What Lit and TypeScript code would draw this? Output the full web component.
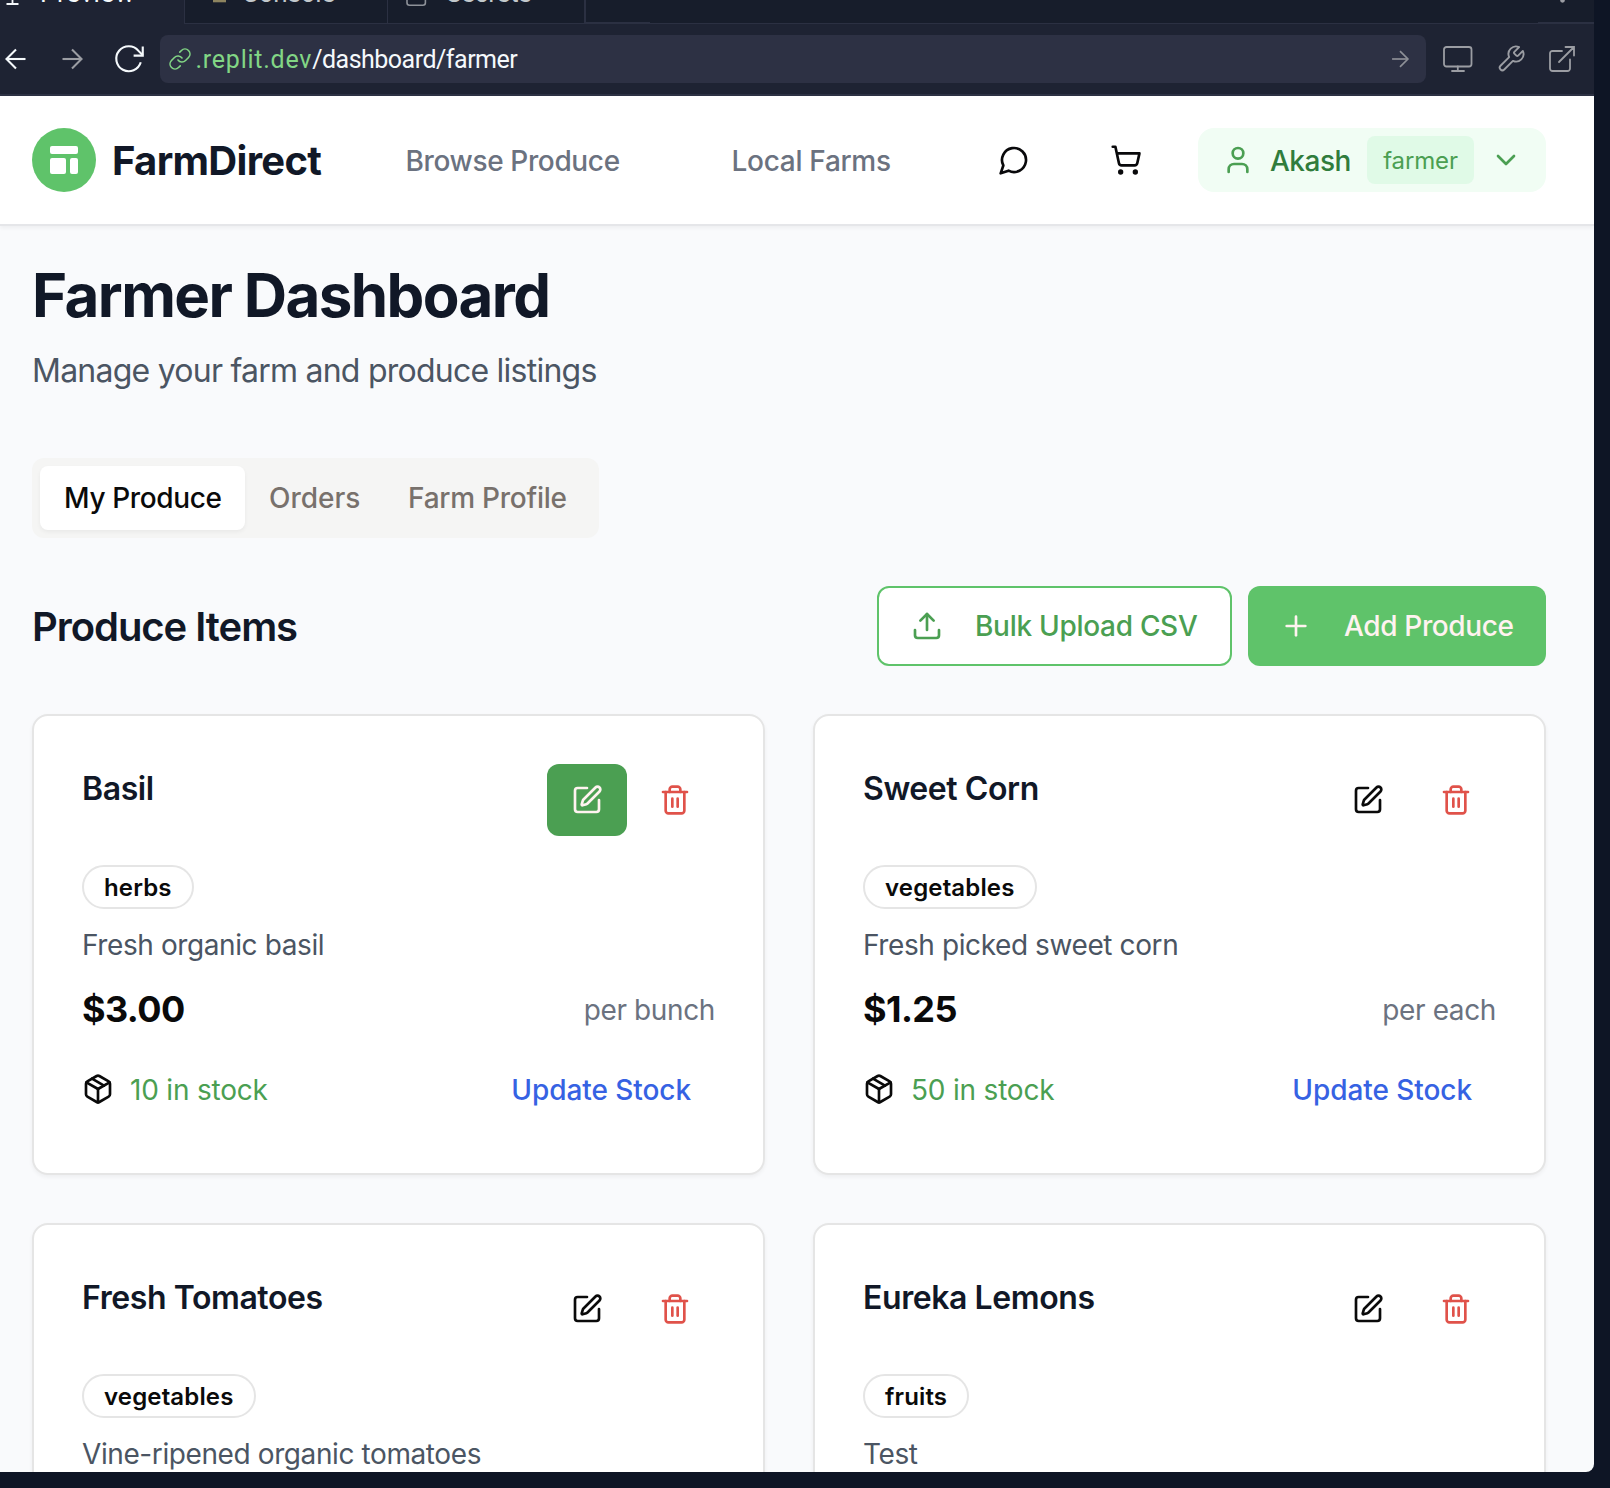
import { LitElement, html, css, svg } from "lit";
import { customElement, property } from "lit/decorators.js";
import { classMap } from "lit/directives/class-map.js";

const paths = {
  back: svg`<path d="M21.5 12h-19"/><path d="M12 2.5 2.5 12l9.5 9.5"/>`,
  forward: svg`<path d="M2.5 12h19"/><path d="m12 2.5 9.5 9.5-9.5 9.5"/>`,
  reload: svg`<path d="M21.4 14.6A10 10 0 1 1 19.6 5.5L23 9"/><path d="M23 2v7.3h-7.3"/>`,
  link: svg`<path d="M10 13a5 5 0 0 0 7.54.54l3-3a5 5 0 0 0-7.07-7.07l-1.72 1.71"/><path d="M14 11a5 5 0 0 0-7.54-.54l-3 3a5 5 0 0 0 7.07 7.07l1.71-1.71"/>`,
  wrench: svg`<path d="M14.7 6.3a1 1 0 0 0 0 1.4l1.6 1.6a1 1 0 0 0 1.4 0l3.77-3.77a6 6 0 0 1-7.94 7.94l-6.91 6.91a2.12 2.12 0 0 1-3-3l6.91-6.91a6 6 0 0 1 7.94-7.94z"/>`,
  message: svg`<path d="M7.9 20A9 9 0 1 0 4 16.1L2 22Z"/>`,
  cart: svg`<circle cx="8" cy="21" r="1"/><circle cx="19" cy="21" r="1"/><path d="M2.05 2.05h2l2.66 12.42a2 2 0 0 0 2 1.58h9.78a2 2 0 0 0 1.95-1.57l1.65-7.43H5.12"/>`,
  user: svg`<path d="M19 21v-2a4 4 0 0 0-4-4H9a4 4 0 0 0-4 4v2"/><circle cx="12" cy="7" r="4"/>`,
  chevron: svg`<path d="m6 9 6 6 6-6"/>`,
  upload: svg`<path d="M21 15v4a2 2 0 0 1-2 2H5a2 2 0 0 1-2-2v-4"/><path d="m17 8-5-5-5 5"/><path d="M12 3v12"/>`,
  plus: svg`<path d="M5 12h14"/><path d="M12 5v14"/>`,
  edit: svg`<path d="M12 3H5a2 2 0 0 0-2 2v14a2 2 0 0 0 2 2h14a2 2 0 0 0 2-2v-7"/><path d="M18.375 2.625a1 1 0 0 1 3 3l-9.013 9.014a2 2 0 0 1-.853.505l-2.873.84a.5.5 0 0 1-.62-.62l.84-2.873a2 2 0 0 1 .506-.852z"/>`,
  trash: svg`<path d="M3 6h18"/><path d="M19 6v14c0 1-1 2-2 2H7c-1 0-2-1-2-2V6"/><path d="M8 6V4c0-1 1-2 2-2h4c1 0 2 1 2 2v2"/><path d="M10 11v6"/><path d="M14 11v6"/>`,
  box: svg`<path d="m7.5 4.27 9 5.15"/><path d="M21 8a2 2 0 0 0-1-1.73l-7-4a2 2 0 0 0-2 0l-7 4A2 2 0 0 0 3 8v8a2 2 0 0 0 1 1.73l7 4a2 2 0 0 0 2 0l7-4A2 2 0 0 0 21 16Z"/><path d="m3.3 7 8.7 5 8.7-5"/><path d="M12 22V12"/>`,
};

const icon = (name: keyof typeof paths, cls = "icon") =>
  html`<svg class=${cls} viewBox="0 0 24 24">${paths[name]}</svg>`;

const iconStyles = css`
  svg {
    display: block;
    flex: none;
    fill: none;
    stroke: currentColor;
    stroke-width: 2;
    stroke-linecap: round;
    stroke-linejoin: round;
    overflow: visible;
  }
  .icon {
    width: 32px;
    height: 32px;
  }
`;

@customElement("browser-chrome")
class BrowserChrome extends LitElement {
  static styles = [
    iconStyles,
    css`
      :host {
        display: block;
        height: 96px;
        box-sizing: border-box;
        background: #1e2333;
        border-bottom: 2px solid #2d3244;
        font-family: Roboto, sans-serif;
        color: #f5f9fc;
      }
      .tabs {
        display: flex;
        height: 24px;
        overflow: hidden;
      }
      .tab {
        display: flex;
        box-sizing: border-box;
        height: 24px;
        border-right: 1px solid #2b3042;
        border-bottom: 1px solid #2b3042;
        background: #171d2b;
        color: #c2c8cc;
      }
      .tab.active {
        background: #1e2333;
        border-bottom: none;
        color: #f5f9fc;
        width: 185px;
        padding-left: 5px;
      }
      .console { width: 203px; padding-left: 24px; }
      .secrets { width: 198px; padding-left: 18px; border-right-width: 2px; }
      .spacer { width: 64px; border-right: none; border-bottom-width: 2px; }
      .filler { flex: 1; border-right: none; }
      .more { width: 56px; border-right: none; border-bottom-width: 2px; padding-left: 22px; }
      .label {
        font-size: 26px;
        line-height: 30px;
        height: 30px;
        margin-top: -22px;
      }
      .tab-icon {
        height: 28px;
        width: 24px;
        margin-top: -22px;
      }
      .active .label { margin-left: 11px; letter-spacing: 0.6px; }
      .console .label { margin-left: 9px; letter-spacing: -0.2px; }
      .secrets .label { margin-left: 16px; letter-spacing: -0.2px; }
      .bar {
        display: flex;
        align-items: center;
        height: 70px;
        box-sizing: border-box;
      }
      .arrow { width: 24px; height: 24px; margin-left: 4px; stroke-width: 2.1; stroke-linecap: butt; stroke-linejoin: miter; }
      .forward { margin-left: 32px; color: #9b9da3; }
      .reload { width: 30px; height: 30px; margin-left: 30px; stroke-width: 1.7; stroke-linecap: butt; stroke-linejoin: miter; }
      .url {
        display: flex;
        align-items: center;
        box-sizing: border-box;
        width: 1266px;
        height: 48px;
        margin-left: 16px;
        padding: 0 16px 0 8px;
        border-radius: 8px;
        background: #2d3144;
        font-size: 25px;
      }
      .link { width: 24px; height: 24px; color: #82d685; stroke-width: 1.6; }
      .address { margin-left: 3.5px; flex: 1; line-height: 48px; padding-top: 2px; letter-spacing: -0.5px; }
      .host { color: #82d685; letter-spacing: 0.75px; }
      .go { width: 20px; height: 20px; margin-left: 0; color: #8e9097; stroke-width: 2; stroke-linecap: butt; stroke-linejoin: miter; }
      .tools { display: flex; align-items: center; color: #9b9da3; }
      .monitor { width: 30px; height: 26px; margin-left: 17px; }
      .wrench { width: 30px; height: 30px; margin-left: 22.5px; stroke-width: 1.5; }
      .external { width: 26px; height: 26px; margin-left: 23.5px; }
    `,
  ];

  render() {
    return html`
      <div class="tabs">
        <div class="tab active">
          <svg class="tab-icon" viewBox="0 0 24 28"><path d="M1.500 26h12M7.500 26V14" stroke-linecap="butt" stroke-width="1.8" /></svg>
          <span class="label">Preview</span>
        </div>
        <div class="tab console">
          <svg class="tab-icon" viewBox="0 0 24 28"><path d="M4 22.8h13" stroke="#8d845f" stroke-width="3" stroke-linecap="butt" /></svg>
          <span class="label">Console</span>
        </div>
        <div class="tab secrets">
          <svg class="tab-icon" viewBox="0 0 24 28"><rect x="1" y="12" width="18.4" height="15.2" rx="2.5" stroke="#8e9299" stroke-width="1.6" /></svg>
          <span class="label">Secrets</span>
        </div>
        <div class="tab spacer"></div>
        <div class="tab filler"></div>
        <div class="tab more">
          <svg width="6" height="6" viewBox="0 0 6 6"><circle cx="2.5" cy="0.3" r="2.4" fill="#9b9da3" stroke="none" /></svg>
        </div>
      </div>
      <div class="bar">
        ${icon("back", "arrow")}${icon("forward", "arrow forward")}${icon("reload", "reload")}
        <div class="url">
          ${icon("link", "link")}
          <span class="address"><span class="host">.replit.dev</span>/dashboard/farmer</span>
          ${icon("forward", "go")}
        </div>
        <div class="tools">
          <svg class="monitor" viewBox="0 0 30 26"><rect x="1" y="1" width="27.5" height="19.5" rx="2.5" stroke-width="1.8" /><path d="M14.8 20.5V25M9 25h12" stroke-width="1.8" /></svg>
          ${icon("wrench", "wrench")}
          <svg class="external" viewBox="0 0 26 26" stroke-linecap="butt"><path d="M13 5H3.5A2.5 2.5 0 0 0 1 7.500V22.500A2.500 2.500 0 0 0 3.500 25H18.500A2.500 2.500 0 0 0 21 22.500V13.500M16.500 1H25V9.500M25 1 10 16" stroke-width="1.8" stroke-linejoin="miter" /></svg>
        </div>
      </div>
    `;
  }
}

@customElement("site-header")
class SiteHeader extends LitElement {
  static styles = [
    iconStyles,
    css`
      :host {
        display: flex;
        align-items: center;
        box-sizing: border-box;
        height: 130px;
        padding: 0 48px 0 32px;
        background: #fff;
        border-bottom: 2px solid #e5e6e9;
        box-shadow: 0 2px 4px rgba(0, 0, 0, 0.05);
        font-size: 28px;
        font-weight: 500;
        color: #6b7280;
      }
      .brand { display: flex; align-items: center; gap: 16px; width: 373.5px; }
      .logo {
        display: flex;
        align-items: center;
        justify-content: center;
        width: 64px;
        height: 64px;
        border-radius: 50%;
        background: #5fc36a;
        color: #fff;
      }
      .name { font-size: 40px; font-weight: 700; letter-spacing: -0.7px; color: #111827; }
      .browse { width: 326px; padding-top: 1px; letter-spacing: -0.36px; }
      .farms { width: 266.5px; padding-top: 1px; letter-spacing: -0.3px; }
      .action { color: #09090b; }
      .cart { margin-left: 80px; margin-right: 56px; }
      .user {
        display: flex;
        align-items: center;
        box-sizing: border-box;
        width: 348px;
        height: 64px;
        padding: 0 24px;
        border-radius: 16px;
        background: #f1fdf4;
        color: #4b9f52;
      }
      .user-name { width: 97px; margin-left: 16px; padding-top: 1px; letter-spacing: -0.5px; color: #307c3c; }
      .role {
        width: 107px;
        height: 48px;
        margin-right: 16px;
        border-radius: 8px;
        background: #e0fae7;
        font-size: 24px;
        font-weight: 400;
        line-height: 50px;
        text-align: center;
        letter-spacing: -0.15px;
      }
    `,
  ];

  render() {
    return html`
      <div class="brand">
        <div class="logo">
          <svg width="28" height="28" viewBox="0 0 28 28" stroke="none">
            <g fill="#fff" stroke="none">
              <rect width="28" height="8" rx="2" />
              <rect y="12" width="16" height="16" rx="2" />
              <rect x="20" y="12" width="8" height="16" rx="2" />
            </g>
          </svg>
        </div>
        <span class="name">FarmDirect</span>
      </div>
      <span class="browse">Browse Produce</span>
      <span class="farms">Local Farms</span>
      <span class="action">${icon("message")}</span>
      <span class="action cart">${icon("cart")}</span>
      <div class="user">
        ${icon("user")}
        <span class="user-name">Akash</span>
        <span class="role">farmer</span>
        ${icon("chevron")}
      </div>
    `;
  }
}

interface Produce {
  name: string;
  category: string;
  description: string;
  price: string;
  unit: string;
  stock: number;
  editing?: boolean;
}

const items: Produce[] = [
  { name: "Basil", category: "herbs", description: "Fresh organic basil", price: "$3.00", unit: "bunch", stock: 10, editing: true },
  { name: "Sweet Corn", category: "vegetables", description: "Fresh picked sweet corn", price: "$1.25", unit: "each", stock: 50 },
  { name: "Fresh Tomatoes", category: "vegetables", description: "Vine-ripened organic tomatoes", price: "", unit: "", stock: 0 },
  { name: "Eureka Lemons", category: "fruits", description: "Test", price: "", unit: "", stock: 0 },
];

@customElement("produce-card")
class ProduceCard extends LitElement {
  @property({ attribute: false }) item!: Produce;

  static styles = [
    iconStyles,
    css`
      :host {
        display: block;
        box-sizing: border-box;
        height: 461px;
        padding: 48px;
        border: 2px solid #e5e5e5;
        border-radius: 16px;
        background: #fff;
        box-shadow: 0 2px 4px rgba(0, 0, 0, 0.05);
        font-size: 28px;
        color: #0a0a0a;
      }
      .head { display: flex; justify-content: space-between; height: 72px; }
      .title { font-size: 32px; line-height: 50px; font-weight: 600; letter-spacing: -0.42px; color: #111827; }
      .actions { display: flex; gap: 8px; }
      .button {
        display: flex;
        align-items: center;
        justify-content: center;
        width: 80px;
        height: 72px;
        border-radius: 12px;
      }
      .editing { background: #4b9f52; color: #fff3f0; }
      .delete { color: #e0524a; }
      .badge {
        display: block;
        box-sizing: border-box;
        width: fit-content;
        height: 44px;
        margin: 29px 0 16px;
        padding: 0 20px;
        border: 2px solid #e5e5e5;
        border-radius: 22px;
        font-size: 24px;
        line-height: 42px;
        font-weight: 600;
        letter-spacing: 0.15px;
      }
      .description { height: 40px; line-height: 41px; white-space: nowrap; letter-spacing: -0.4px; color: #4b5563; }
      .row { display: flex; align-items: center; justify-content: space-between; }
      .pricing { height: 56px; margin: 16px 0; }
      .price { font-size: 36px; font-weight: 700; letter-spacing: -0.6px; }
      .unit { padding-top: 1px; letter-spacing: -0.38px; color: #6b7280; }
      .inventory { height: 72px; }
      .stock { display: flex; align-items: center; gap: 16px; }
      .in-stock { padding-top: 1px; letter-spacing: -0.2px; color: #4b9f52; }
      .update { padding-top: 1px; padding-right: 24px; font-weight: 500; letter-spacing: -0.07px; color: #3662e3; }
    `,
  ];

  render() {
    const i = this.item;
    return html`
      <div class="head">
        <span class="title">${i.name}</span>
        <div class="actions">
          <div class=${classMap({ button: true, editing: !!i.editing })}>${icon("edit")}</div>
          <div class="button delete">${icon("trash")}</div>
        </div>
      </div>
      <span class="badge">${i.category}</span>
      <div class="description">${i.description}</div>
      ${i.price
        ? html`
            <div class="row pricing">
              <span class="price">${i.price}</span>
              <span class="unit">per ${i.unit}</span>
            </div>
            <div class="row inventory">
              <div class="stock">${icon("box")}<span class="in-stock">${i.stock} in stock</span></div>
              <span class="update">Update Stock</span>
            </div>
          `
        : null}
    `;
  }
}

@customElement("app-root")
class AppRoot extends LitElement {
  static styles = [
    iconStyles,
    css`
      :host {
        display: block;
        box-sizing: border-box;
        width: 1610px;
        height: 1488px;
        padding: 0 16px 16px 0;
        overflow: hidden;
        background: #0e1525;
        font-family: Inter, "Liberation Sans", sans-serif;
      }
      .frame {
        height: 1472px;
        overflow: hidden;
        border-radius: 0 0 8px 0;
        background: #f9fafc;
      }
      main { padding: 33px 48px 0 32px; }
      h1, h2, p { margin: 0; }
      h1 { font-size: 60px; line-height: 72px; font-weight: 700; letter-spacing: -1.6px; color: #111827; }
      p { margin: 16px 0 63px; font-size: 32px; line-height: 48px; letter-spacing: -0.76px; color: #4b5563; }
      .tabs {
        display: flex;
        box-sizing: border-box;
        width: 567px;
        height: 80px;
        padding: 8px;
        border-radius: 12px;
        background: #f5f5f4;
        font-size: 28px;
        line-height: 65px;
        font-weight: 500;
        color: #78716c;
      }
      .tab { box-sizing: border-box; height: 64px; padding-left: 24px; border-radius: 8px; white-space: nowrap; }
      .produce {
        width: 205px;
        background: #fff;
        color: #0a0a0a;
        letter-spacing: -0.36px;
        box-shadow: 0 2px 4px rgba(0, 0, 0, 0.05);
      }
      .orders { width: 139px; }
      .profile { letter-spacing: -0.25px; }
      .toolbar { display: flex; align-items: center; justify-content: space-between; height: 80px; margin: 48px 0; }
      h2 { padding-top: 2px; font-size: 40px; line-height: 56px; font-weight: 600; letter-spacing: -1.05px; color: #111827; }
      .buttons { display: flex; gap: 16px; font-size: 28px; font-weight: 500; }
      .button {
        display: flex;
        align-items: center;
        box-sizing: border-box;
        height: 80px;
        padding-left: 32px;
        border-radius: 12px;
        gap: 32px;
        white-space: nowrap;
      }
      .bulk { width: 355px; border: 2px solid #5fc36a; background: #fff; color: #4b9f52; letter-spacing: -0.29px; }
      .add { width: 298px; background: #5fc36a; color: #fff3f0; letter-spacing: -0.36px; }
      .grid { display: grid; grid-template-columns: 1fr 1fr; gap: 48px; }
    `,
  ];

  render() {
    return html`
      <div class="frame">
        <browser-chrome></browser-chrome>
        <site-header></site-header>
        <main>
          <h1>Farmer Dashboard</h1>
          <p>Manage your farm and produce listings</p>
          <div class="tabs">
            <span class="tab produce">My Produce</span>
            <span class="tab orders">Orders</span>
            <span class="tab profile">Farm Profile</span>
          </div>
          <div class="toolbar">
            <h2>Produce Items</h2>
            <div class="buttons">
              <div class="button bulk">${icon("upload")}<span>Bulk Upload CSV</span></div>
              <div class="button add">${icon("plus")}<span>Add Produce</span></div>
            </div>
          </div>
          <div class="grid">${items.map((item) => html`<produce-card .item=${item}></produce-card>`)}</div>
        </main>
      </div>
    `;
  }
}
